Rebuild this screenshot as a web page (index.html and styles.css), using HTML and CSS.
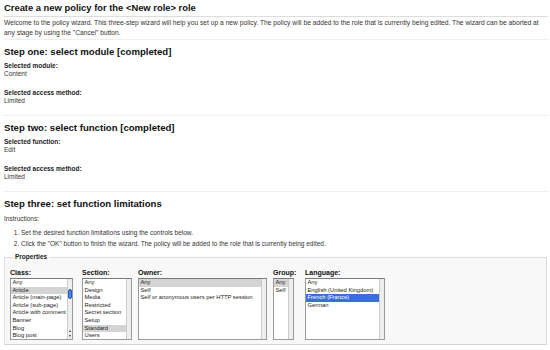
FILE: index.html
```html
<!DOCTYPE html>
<html>
<head>
    <title>New policy</title>
    <link rel="stylesheet" href="styles.css">
</head>
<body>
    <div class="page">
        <h1 class="title">Create a new policy for the &lt;New role&gt; role</h1>
        <p class="intro">Welcome to the policy wizard. This three-step wizard will help you set up a new policy. The policy will be added to the role that is currently being edited. The wizard can be aborted at any stage by using the "Cancel" button.</p>

        <div class="step">
            <h2>Step one: select module [completed]</h2>
            <div class="field">
                <div class="field-label">Selected module:</div>
                <div class="field-value">Content</div>
            </div>
            <div class="field">
                <div class="field-label">Selected access method:</div>
                <div class="field-value">Limited</div>
            </div>
        </div>

        <div class="step">
            <h2>Step two: select function [completed]</h2>
            <div class="field">
                <div class="field-label">Selected function:</div>
                <div class="field-value">Edit</div>
            </div>
            <div class="field">
                <div class="field-label">Selected access method:</div>
                <div class="field-value">Limited</div>
            </div>
        </div>

        <div class="step last">
            <h2>Step three: set function limitations</h2>
            <div class="instructions">Instructions:</div>
            <ol class="steps-list">
                <li>Set the desired function limitations using the controls below.</li>
                <li>Click the "OK" button to finish the wizard. The policy will be added to the role that is currently being edited.</li>
            </ol>

            <fieldset class="properties">
                <legend>Properties</legend>
                <div class="columns">
                    <div class="column col-class">
                        <label>Class:</label>
                        <div class="listbox w-class">
                            <div class="options">
                                <div class="option">Any</div>
                                <div class="option selected">Article</div>
                                <div class="option">Article (main-page)</div>
                                <div class="option">Article (sub-page)</div>
                                <div class="option">Article with comment</div>
                                <div class="option">Banner</div>
                                <div class="option">Blog</div>
                                <div class="option">Blog post</div>
                            </div>
                            <div class="scrollbar">
                                <div class="thumb"></div>
                                <div class="arrows">
                                    <span class="arrow up"></span>
                                    <span class="arrow down"></span>
                                </div>
                            </div>
                        </div>
                    </div>
                    <div class="column col-section">
                        <label>Section:</label>
                        <div class="listbox w-section">
                            <div class="options">
                                <div class="option">Any</div>
                                <div class="option">Design</div>
                                <div class="option">Media</div>
                                <div class="option">Restricted</div>
                                <div class="option">Secret section</div>
                                <div class="option">Setup</div>
                                <div class="option selected">Standard</div>
                                <div class="option">Users</div>
                            </div>
                            <div class="scrollbar"></div>
                        </div>
                    </div>
                    <div class="column col-owner">
                        <label>Owner:</label>
                        <div class="listbox w-owner">
                            <div class="options">
                                <div class="option selected">Any</div>
                                <div class="option">Self</div>
                                <div class="option">Self or anonymous users per HTTP session</div>
                            </div>
                            <div class="scrollbar"></div>
                        </div>
                    </div>
                    <div class="column col-group">
                        <label>Group:</label>
                        <div class="listbox w-group">
                            <div class="options">
                                <div class="option selected">Any</div>
                                <div class="option">Self</div>
                            </div>
                            <div class="scrollbar"></div>
                        </div>
                    </div>
                    <div class="column col-language">
                        <label>Language:</label>
                        <div class="listbox w-language">
                            <div class="options">
                                <div class="option">Any</div>
                                <div class="option">English (United Kingdom)</div>
                                <div class="option active">French (France)</div>
                                <div class="option">German</div>
                            </div>
                            <div class="scrollbar"></div>
                        </div>
                    </div>
                </div>
            </fieldset>
        </div>
    </div>
</body>
</html>
```

FILE: styles.css
```css
body {
    margin: 0;
    font-family: "Liberation Sans", Arial, sans-serif;
    color: #333;
    background-color: #fff;
}
.page {
    padding: 2px 2px 0 4px;
}
.title {
    margin: 0;
    padding-bottom: 2px;
    font-size: 9.4px;
    line-height: 12px;
    color: #111;
    border-bottom: 1px solid #ddd;
}
.intro {
    margin: 1px 0 0;
    padding-bottom: 1px;
    font-size: 6.7px;
    line-height: 10px;
    border-bottom: 1px solid #eee;
}
.step {
    padding-bottom: 10px;
    border-bottom: 1px solid #eee;
}
.step.last {
    border-bottom: none;
    padding-bottom: 0;
}
.step h2 {
    margin: 5px 0 0;
    font-size: 9.6px;
    line-height: 14px;
    color: #111;
}
.field {
    margin-top: 11px;
    font-size: 6.5px;
    line-height: 8px;
}
.step h2 + .field {
    margin-top: 3px;
}
.field-label {
    font-weight: bold;
    color: #222;
}
.instructions {
    margin-top: 4px;
    font-size: 6.5px;
    line-height: 8px;
}
.steps-list {
    margin: 4px 0 0;
    padding-left: 17px;
    font-size: 6.5px;
    line-height: 11px;
}
.properties {
    margin: 4px 1px 0 0;
    padding: 8px 5px 4px 5px;
    background-color: #f8f8f8;
    border: 1px solid #ddd;
    border-bottom-color: #d4d4d4;
}
.properties legend {
    padding: 0 2px;
    margin-left: 3px;
    font-size: 6.5px;
    line-height: 8px;
    font-weight: bold;
    color: #222;
}
.columns {
    display: flex;
}
.column label {
    display: block;
    font-size: 7px;
    line-height: 8px;
    font-weight: bold;
    color: #111;
    margin-bottom: 1px;
}
.col-class { width: 72px; }
.col-section { width: 56px; }
.col-owner { width: 135px; }
.col-group { width: 32px; }
.col-language { width: 80px; }
.listbox {
    display: flex;
    height: 62px;
    box-sizing: border-box;
    background-color: #fff;
    border: 1px solid #9a9a9a;
    border-top-color: #7a7a7a;
}
.w-class { width: 63px; }
.w-section { width: 50px; }
.w-owner { width: 129px; }
.w-group { width: 21px; }
.w-language { width: 80px; }
.options {
    flex: 1;
    min-width: 0;
    overflow: hidden;
}
.option {
    padding-left: 1.5px;
    font-size: 5.8px;
    line-height: 7.6px;
    white-space: nowrap;
    color: #222;
}
.option.selected {
    background-color: #d4d4d4;
}
.option.active {
    background-color: #3a6fd8;
    color: #fff;
}
.scrollbar {
    width: 4px;
    display: flex;
    flex-direction: column;
    justify-content: space-between;
    background-color: #eee;
    border-left: 1px solid #ccc;
}
.thumb {
    margin: 10px 0 0 0;
    height: 10px;
    border-radius: 3px;
    background-color: #4b86e0;
    border: 1px solid #2a5ab8;
    box-sizing: border-box;
}
.arrows {
    display: flex;
    flex-direction: column;
    align-items: center;
    gap: 3px;
    padding-bottom: 2px;
}
.arrow {
    width: 0;
    height: 0;
    border-left: 1.5px solid transparent;
    border-right: 1.5px solid transparent;
}
.arrow.up {
    border-bottom: 2px solid #333;
}
.arrow.down {
    border-top: 2px solid #333;
}
```
